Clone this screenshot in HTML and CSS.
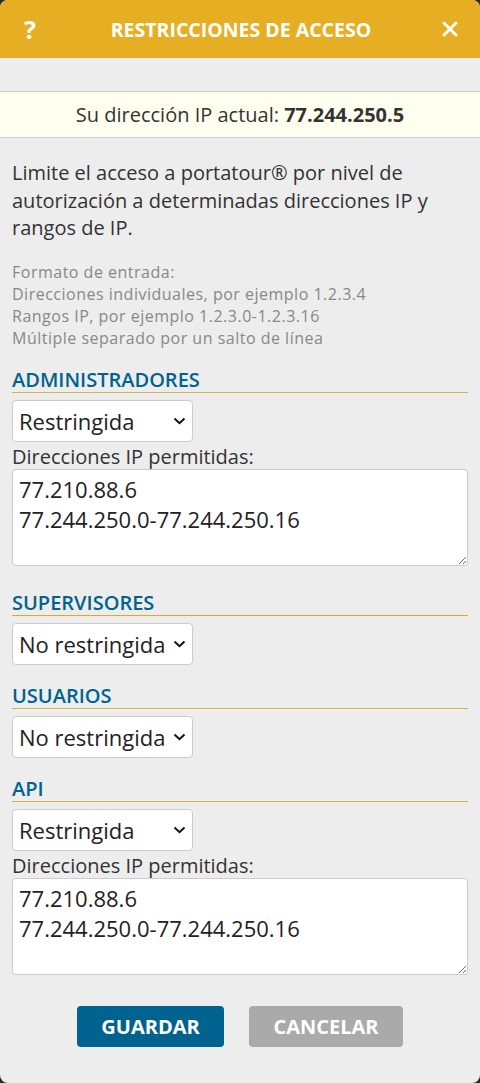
FILE: index.html
```html
<!DOCTYPE html>
<html lang="es">
  <head>
    <meta charset="UTF-8" />
    <meta name="viewport" content="width=device-width, initial-scale=1.0" />
    <title>Restricciones de acceso</title>
    <link rel="stylesheet" href="styles.css">
  </head>
  <body>
    <div class="dialog">
      <div class="dialog-header">
        <span class="help">?</span>
        <h1>RESTRICCIONES DE ACCESO</h1>
        <span class="close">
          <svg width="16" height="16" viewBox="0 0 16 16">
            <path d="M2 2L14 14M14 2L2 14" stroke="#fff" stroke-width="3" stroke-linecap="round" />
          </svg>
        </span>
      </div>

      <div class="ip-bar">Su dirección IP actual: <b>77.244.250.5</b></div>

      <div class="content">
        <p class="intro">
          Limite el acceso a portatour® por nivel de autorización a determinadas
          direcciones IP y rangos de IP.
        </p>
        <p class="hint">
          Formato de entrada:<br />
          Direcciones individuales, por ejemplo 1.2.3.4<br />
          Rangos IP, por ejemplo 1.2.3.0-1.2.3.16<br />
          Múltiple separado por un salto de línea
        </p>

        <div class="section">
          <h2>ADMINISTRADORES</h2>
          <div class="select-wrap">
            <select>
              <option selected>Restringida</option>
              <option>No restringida</option>
            </select>
            <svg class="chevron" width="13" height="8" viewBox="0 0 13 8">
              <path d="M1.5 1.5L6.5 6.2L11.5 1.5" fill="none" stroke="#111" stroke-width="2" />
            </svg>
          </div>
          <label>Direcciones IP permitidas:</label>
          <textarea rows="3">77.210.88.6
77.244.250.0-77.244.250.16</textarea>
        </div>

        <div class="section">
          <h2 class="active">SUPERVISORES</h2>
          <div class="select-wrap">
            <select>
              <option>Restringida</option>
              <option selected>No restringida</option>
            </select>
            <svg class="chevron" width="13" height="8" viewBox="0 0 13 8">
              <path d="M1.5 1.5L6.5 6.2L11.5 1.5" fill="none" stroke="#111" stroke-width="2" />
            </svg>
          </div>
        </div>

        <div class="section">
          <h2>USUARIOS</h2>
          <div class="select-wrap">
            <select>
              <option>Restringida</option>
              <option selected>No restringida</option>
            </select>
            <svg class="chevron" width="13" height="8" viewBox="0 0 13 8">
              <path d="M1.5 1.5L6.5 6.2L11.5 1.5" fill="none" stroke="#111" stroke-width="2" />
            </svg>
          </div>
        </div>

        <div class="section">
          <h2>API</h2>
          <div class="select-wrap">
            <select>
              <option selected>Restringida</option>
              <option>No restringida</option>
            </select>
            <svg class="chevron" width="13" height="8" viewBox="0 0 13 8">
              <path d="M1.5 1.5L6.5 6.2L11.5 1.5" fill="none" stroke="#111" stroke-width="2" />
            </svg>
          </div>
          <label>Direcciones IP permitidas:</label>
          <textarea rows="3">77.210.88.6
77.244.250.0-77.244.250.16</textarea>
        </div>

        <div class="actions">
          <button class="btn-save">GUARDAR</button>
          <button class="btn-cancel">CANCELAR</button>
        </div>
      </div>
    </div>
  </body>
</html>
```

FILE: styles.css
```css
* {
  margin: 0;
  padding: 0;
  box-sizing: border-box;
}
body {
  font-family: "Open Sans", Arial, sans-serif;
  background-color: #2b2b2b;
  color: #333;
}
.dialog {
  background-color: #ededed;
  min-height: 1083px;
  border-radius: 8px;
  overflow: hidden;
}
.dialog-header {
  height: 58px;
  background-color: #e6af23;
  color: #fff;
  display: flex;
  align-items: center;
  justify-content: space-between;
  padding: 0 22px 0 24px;
}
.dialog-header h1 {
  font-size: 19.5px;
  font-weight: 700;
}
.help {
  font-size: 25px;
  font-weight: 700;
  width: 16px;
}
.close {
  display: flex;
  width: 16px;
}
.ip-bar {
  margin-top: 33px;
  height: 47px;
  background-color: #fffff0;
  border-top: 1px solid #ccc;
  border-bottom: 1px solid #ccc;
  text-align: center;
  font-size: 20px;
  line-height: 45px;
}
.content {
  padding: 0 12px;
}
.intro {
  margin-top: 21px;
  font-size: 20px;
  line-height: 27.5px;
}
.hint {
  margin-top: 19px;
  font-size: 16px;
  letter-spacing: 0.5px;
  line-height: 22px;
  color: #888;
}
.section {
  margin-top: 19px;
}
.section h2 {
  font-size: 20px;
  font-weight: 600;
  line-height: 24px;
  color: #00628f;
  border-bottom: 1px solid #d8b24e;
  margin-bottom: 7px;
}
.section h2.active {
  border-bottom-color: #e8aa12;
}
.select-wrap {
  position: relative;
  width: 181px;
}
select {
  display: block;
  width: 181px;
  height: 42px;
  appearance: none;
  font-family: "Open Sans", Arial, sans-serif;
  font-size: 22px;
  color: #222;
  background-color: #fff;
  border: 1px solid #ccc;
  border-radius: 4px;
  padding: 0 24px 0 6px;
}
.chevron {
  position: absolute;
  right: 7px;
  top: 17px;
  pointer-events: none;
}
label {
  display: block;
  margin-top: 3px;
  font-size: 20px;
  line-height: 24px;
}
textarea {
  display: block;
  width: 100%;
  height: 97px;
  font-family: "Open Sans", Arial, sans-serif;
  font-size: 22px;
  line-height: 30px;
  color: #222;
  padding: 4px 6px;
  border: 1px solid #ccc;
  border-radius: 4px;
  margin-bottom: 25px;
}
.actions {
  display: flex;
  justify-content: center;
  gap: 25px;
  margin-top: 31px;
}
.actions button {
  height: 41px;
  border: none;
  border-radius: 4px;
  color: #fff;
  font-family: "Open Sans", Arial, sans-serif;
  font-size: 20px;
  font-weight: 700;
  cursor: pointer;
}
.btn-save {
  width: 147px;
  background-color: #00628f;
}
.btn-cancel {
  width: 154px;
  background-color: #aaa;
}
```
